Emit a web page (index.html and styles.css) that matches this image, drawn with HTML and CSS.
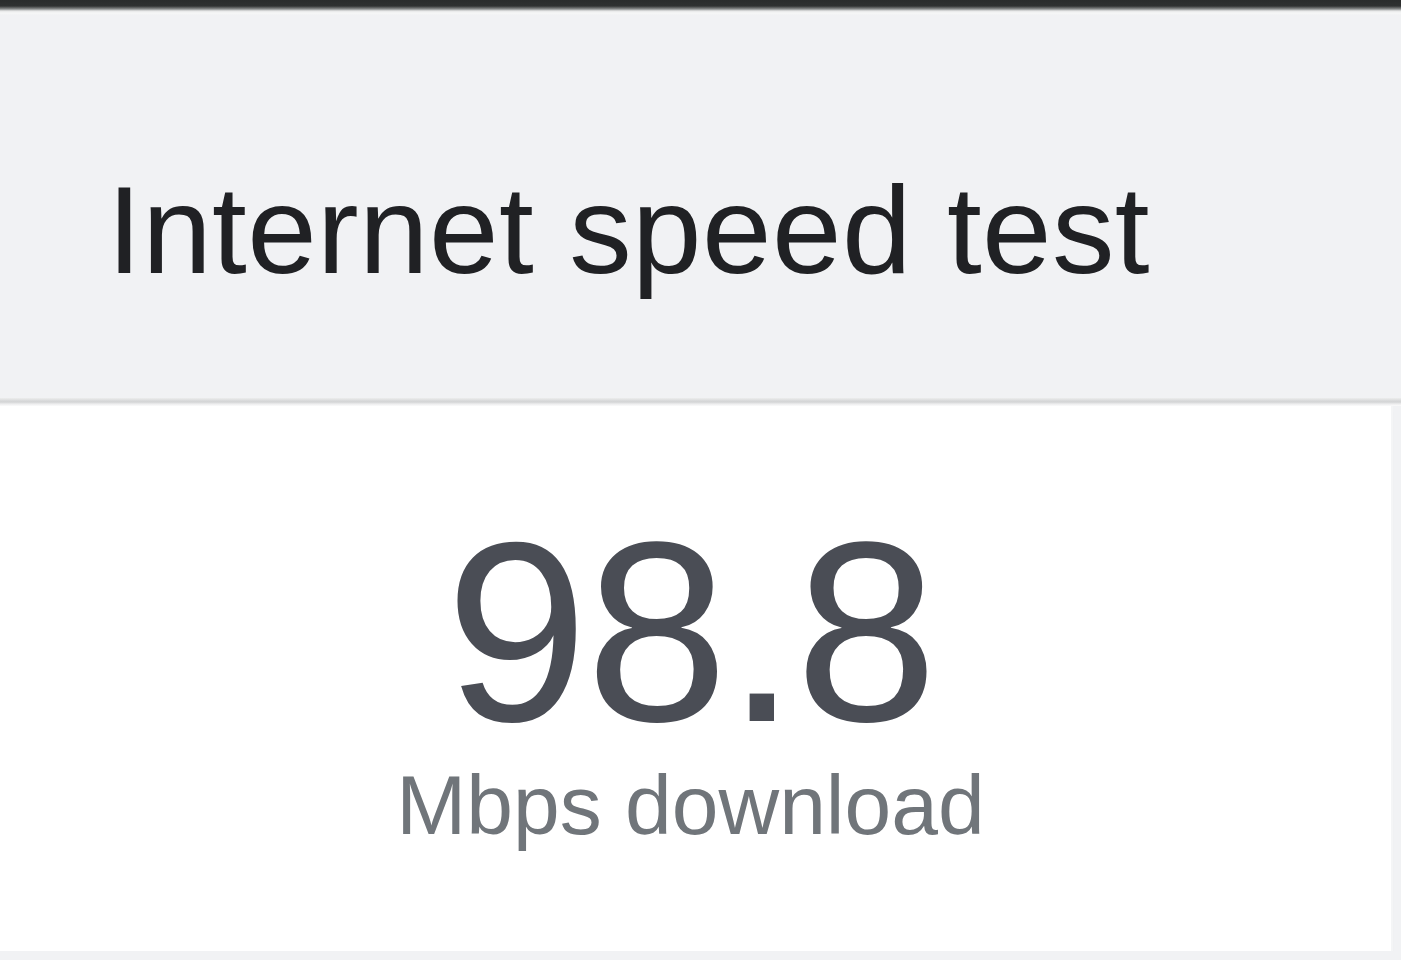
FILE: index.html
```html
<!DOCTYPE html>
<html lang="en">
<head>
  <meta charset="UTF-8" />
  <meta name="viewport" content="width=device-width, initial-scale=1.0"/>
  <title>Internet speed test</title>
  <link rel="stylesheet" href="styles.css">
</head>
<body>

  <div class="topbar"></div>

  <header class="header">
    <h1>Internet speed test</h1>
  </header>

  <div class="rule"></div>

  <main class="card">
    <div class="speed">98.8</div>
    <div class="unit">Mbps download</div>
  </main>

</body>
</html>
```

FILE: styles.css
```css
body {
  margin: 0;
  background: #f1f2f4;
  font-family: Arial, "Liberation Sans", sans-serif;
  overflow: hidden;
}

.topbar {
  height: 15px;
  background: linear-gradient(to bottom, #2a2c2c 0, #2f3131 6px, #8a8c8c 9px, #e6e7e7 11px, #f6f7f7 13px, #f1f2f4 15px);
}

.header {
  box-sizing: border-box;
  height: 383px;
  padding: 152px 0 0 107px;
}

.header h1 {
  margin: 0;
  font-size: 125px;
  font-weight: normal;
  line-height: 1;
  color: #202124;
  letter-spacing: 0.4px;
}

.rule {
  height: 8px;
  background: linear-gradient(to bottom, #eceded 0, #d6d7d8 3px, #d3d4d5 4px, #ededee 6px, #fbfbfb 8px);
}

.card {
  box-sizing: border-box;
  height: 545px;
  margin-right: 8px;
  background: #fff;
  border-right: 2px solid #f4f5f6;
  padding: 98px 10px 0 0;
  text-align: center;
  box-shadow: 0 4px 4px -2px rgba(0, 0, 0, 0.06);
}

.speed {
  font-size: 256px;
  line-height: 1;
  color: #4a4d55;
  letter-spacing: -2px;
}

.unit {
  margin-top: 3px;
  font-size: 84px;
  line-height: 1;
  color: #70757a;
}
```
